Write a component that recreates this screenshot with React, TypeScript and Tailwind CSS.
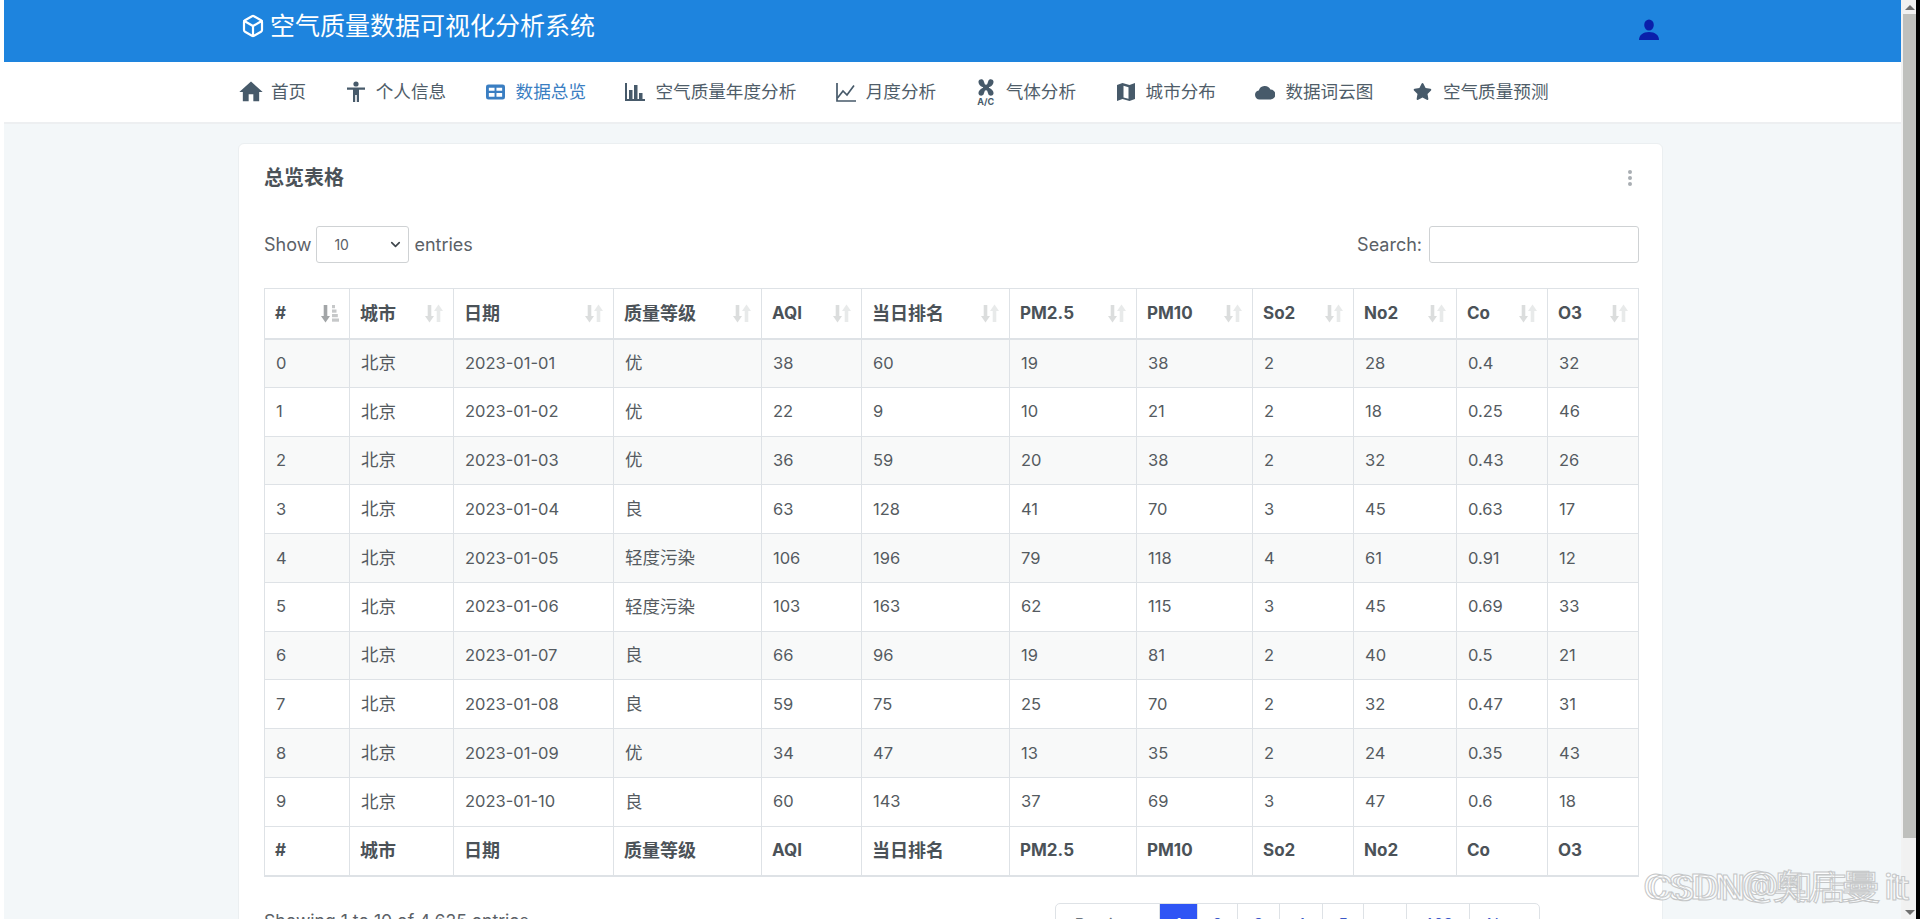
import React from "react";
import { FaStar } from "react-icons/fa";
import { MdHome } from "react-icons/md";
import { Box, ChevronDown } from "lucide-react";

const cols = [
  { n: "#", w: 85 },
  { n: "城市", w: 104 },
  { n: "日期", w: 160 },
  { n: "质量等级", w: 148 },
  { n: "AQI", w: 100 },
  { n: "当日排名", w: 148 },
  { n: "PM2.5", w: 127 },
  { n: "PM10", w: 116 },
  { n: "So2", w: 101 },
  { n: "No2", w: 103 },
  { n: "Co", w: 91 },
  { n: "O3", w: 91 },
];

const rows: (string | number)[][] = [
  [0, "北京", "2023-01-01", "优", 38, 60, 19, 38, 2, 28, 0.4, 32],
  [1, "北京", "2023-01-02", "优", 22, 9, 10, 21, 2, 18, 0.25, 46],
  [2, "北京", "2023-01-03", "优", 36, 59, 20, 38, 2, 32, 0.43, 26],
  [3, "北京", "2023-01-04", "良", 63, 128, 41, 70, 3, 45, 0.63, 17],
  [4, "北京", "2023-01-05", "轻度污染", 106, 196, 79, 118, 4, 61, 0.91, 12],
  [5, "北京", "2023-01-06", "轻度污染", 103, 163, 62, 115, 3, 45, 0.69, 33],
  [6, "北京", "2023-01-07", "良", 66, 96, 19, 81, 2, 40, 0.5, 21],
  [7, "北京", "2023-01-08", "良", 59, 75, 25, 70, 2, 32, 0.47, 31],
  [8, "北京", "2023-01-09", "优", 34, 47, 13, 35, 2, 24, 0.35, 43],
  [9, "北京", "2023-01-10", "良", 60, 143, 37, 69, 3, 47, 0.6, 18],
];

const pages = [
  { t: "Previous", w: 104, c: "text-[#6c757d]" },
  { t: "1", w: 38, c: "bg-[#2f55f5] text-white" },
  { t: "2", w: 40, c: "text-[#3a57c8]" },
  { t: "3", w: 42, c: "text-[#3a57c8]" },
  { t: "4", w: 43, c: "text-[#3a57c8]" },
  { t: "5", w: 41, c: "text-[#3a57c8]" },
  { t: "…", w: 43, c: "text-[#6c757d]" },
  { t: "463", w: 63, c: "text-[#3a57c8]" },
  { t: "Next", w: 69, c: "text-[#3a57c8]" },
];

const cjk = (v: string | number) => typeof v === "string" && /[\u4e00-\u9fff]/.test(v);

function SortIcon({ active }: { active?: boolean }) {
  if (active) {
    return (
      <svg width="18" height="19" viewBox="0 0 18 19" className="shrink-0">
        <path d="M4.500 1v12" stroke="#a2a5a7" strokeWidth="3.600" />
        <path d="M0 12h9l-4.500 6.500z" fill="#a2a5a7" />
        <rect x="11" y="1" width="3" height="3.200" fill="#c6c8c9" />
        <rect x="11" y="5.500" width="4.500" height="3.200" fill="#c6c8c9" />
        <rect x="11" y="10" width="5.800" height="3.200" fill="#c6c8c9" />
        <rect x="11" y="14.500" width="7" height="3.200" fill="#c6c8c9" />
      </svg>
    );
  }
  return (
    <svg width="18" height="19" viewBox="0 0 18 19" className="shrink-0">
      <path d="M4.500 1v12" stroke="#dbdddd" strokeWidth="3.600" />
      <path d="M0 12h9l-4.500 6.500z" fill="#dbdddd" />
      <path d="M13.500 18V6" stroke="#e8eaea" strokeWidth="3.600" />
      <path d="M9 7h9L13.500 .5z" fill="#e8eaea" />
    </svg>
  );
}

function PersonIcon() {
  return (
    <svg width="20" height="22" viewBox="0 0 20 22" fill="#475a6a">
      <circle cx="10" cy="3" r="2.600" />
      <path d="M1 6.500h18v2.200h-6V21h-2.200v-7H9.200v7H7V8.700H1z" />
    </svg>
  );
}

function GridIcon() {
  return (
    <svg width="19" height="16" viewBox="0 0 20 16" fill="#3a7ec2">
      <path d="M2.500 0h15A2.500 2.500 0 0 1 20 2.500v11a2.500 2.500 0 0 1-2.500 2.500h-15A2.500 2.500 0 0 1 0 13.500v-11A2.500 2.500 0 0 1 2.500 0zM3 3.500v3.300h6V3.500zm8 0v3.300h6V3.500zM3 9v4h6V9zm8 0v4h6V9z" fillRule="evenodd" />
    </svg>
  );
}

function BarsIcon() {
  return (
    <svg width="20" height="20" viewBox="0 0 20 20" fill="#475a6a">
      <rect x="0" y="1" width="2" height="18" />
      <rect x="0" y="17" width="20" height="2" />
      <rect x="4" y="8" width="3.500" height="9" />
      <rect x="9" y="3" width="3.500" height="14" />
      <rect x="14" y="11" width="3.500" height="6" />
    </svg>
  );
}

function LineIcon() {
  return (
    <svg width="20" height="20" viewBox="0 0 20 20" fill="none" stroke="#475a6a" strokeWidth="1.700">
      <path d="M1 1v18h19" />
      <path d="M1.500 16 7 9l4 4 7-9.500" />
    </svg>
  );
}

function FanIcon() {
  return (
    <span className="flex w-[20px] flex-col items-center">
      <svg width="18" height="17" viewBox="0 0 18 17" fill="#475a6a">
        <path d="M9 8.500 6.500 1.500C5.500-.2 2-.2 1.500 2.500c-.3 2 1.500 4.500 4 5.500zM9 8.500l2.500-7c1-1.700 4.500-1.700 5 1 .3 2-1.500 4.500-4 5.500zM9 8.500l-2.500 7c-1 1.700-4.500 1.700-5-1-.3-2 1.500-4.500 4-5.500zM9 8.500l2.500 7c1 1.700 4.500 1.700 5-1 .3-2-1.500-4.500-4-5.500z" />
        <circle cx="9" cy="8.500" r="3" />
      </svg>
      <span className="mt-[1px] text-[9px] leading-[9px] font-bold text-[#475a6a]">A/C</span>
    </span>
  );
}

function MapIcon() {
  return (
    <svg width="18" height="20" viewBox="0 0 18 20" fill="#475a6a">
      <path d="M0 3 5.500 1 12.500 3 18 1v16l-5.500 2-7-2L0 19zM6.500 3.800v11.600l5 1.400V5.200z" fillRule="evenodd" />
    </svg>
  );
}

function CloudIcon() {
  return (
    <svg width="24" height="18" viewBox="0 0 24 18" fill="#475a6a">
      <path d="M5.500 18A5.500 5.500 0 0 1 4.500 7.100 7.500 7.500 0 0 1 18.500 6 6 6 0 0 1 18.500 18z" />
    </svg>
  );
}

function UserIcon() {
  return (
    <svg width="22" height="22" viewBox="0 0 22 22" fill="#0a1faa">
      <ellipse cx="11" cy="6" rx="4.800" ry="5.500" />
      <path d="M1 21c0-5 4-8 10-8s10 3 10 8z" />
    </svg>
  );
}

const nav = [
  { t: "首页", i: <MdHome size={28} color="#475a6a" className="shrink-0" /> },
  { t: "个人信息", i: <PersonIcon /> },
  { t: "数据总览", i: <GridIcon />, active: true },
  { t: "空气质量年度分析", i: <BarsIcon /> },
  { t: "月度分析", i: <LineIcon /> },
  { t: "气体分析", i: <FanIcon /> },
  { t: "城市分布", i: <MapIcon /> },
  { t: "数据词云图", i: <CloudIcon /> },
  { t: "空气质量预测", i: <FaStar size={19} color="#475a6a" /> },
];

export default function App() {
  return (
    <div className="relative flex h-[919px] w-[1920px] overflow-hidden bg-white [font-family:Inter,'Noto_Sans_CJK_SC',sans-serif] text-[#555b61]">
      <div className="w-[4px] shrink-0 bg-white" />
      <main className="flex h-full w-[1897px] shrink-0 flex-col bg-[#f3f7f9]">
        <header className="h-[62px] shrink-0 bg-[#1e84de]">
          <div className="ml-[237px] flex h-full w-[1425px] items-start justify-between">
            <div className="flex items-center gap-[5px] pt-[7px] text-[25px] leading-[38px] text-white">
              <Box size={24} strokeWidth={2.200} />
              <span>空气质量数据可视化分析系统</span>
            </div>
            <div className="mr-[6px] mt-[19px]">
              <UserIcon />
            </div>
          </div>
        </header>
        <nav className="h-[62px] shrink-0 border-b-2 border-[#edeff1] bg-white">
          <div className="ml-[237px] flex h-full items-center gap-[39.5px]">
            {nav.map((n) => (
              <div key={n.t} className={`flex items-center gap-[10px] text-[17.6px] ${n.active ? "text-[#3a7ec2]" : "text-[#4f5d69]"}`}>
                <span className="flex w-[20px] items-center justify-center">{n.i}</span>
                <span>{n.t}</span>
              </div>
            ))}
          </div>
        </nav>
        <section className="ml-[234px] mt-[19px] w-[1425px] rounded-t-[6px] border border-[#ebeff1] bg-white px-[25px]">
          <div className="flex h-[70px] items-center justify-between pb-[2px]">
            <h2 className="text-[20px] font-bold text-[#4b5258]">总览表格</h2>
            <div className="mr-[5px] flex flex-col gap-[2px]">
              <span className="h-[4px] w-[4px] rounded-full bg-[#a9aeb3]" />
              <span className="h-[4px] w-[4px] rounded-full bg-[#a9aeb3]" />
              <span className="h-[4px] w-[4px] rounded-full bg-[#a9aeb3]" />
            </div>
          </div>
          <div className="mt-[12px] flex h-[37px] w-[1375px] items-center justify-between text-[18px] text-[#5b6167]">
            <div className="flex items-center gap-[5px]">
              <span>Show</span>
              <div className="flex h-[37px] w-[93px] items-center justify-between rounded-[3px] border border-[#cfd2d4] pl-[17px] pr-[5px] text-[14px]">
                <span>10</span>
                <ChevronDown size={15} strokeWidth={2.600} color="#3f464c" />
              </div>
              <span>entries</span>
            </div>
            <div className="flex items-center gap-[7px]">
              <span>Search:</span>
              <div className="h-[37px] w-[210px] rounded-[3px] border border-[#cfd2d4] bg-white" />
            </div>
          </div>
          <table className="mt-[25px] w-[1375px] table-fixed border-collapse">
            <colgroup>
              {cols.map((c) => (
                <col key={c.n} style={{ width: c.w }} />
              ))}
            </colgroup>
            <thead>
              <tr className="h-[50px]">
                {cols.map((c, i) => (
                  <th key={c.n} className={`border border-b-2 border-[#dee2e6] px-[10px] text-left font-bold text-[#4b5258] ${cjk(c.n) ? "text-[18px]" : "text-[17px]"}`}>
                    <div className="flex items-center justify-between">
                      <span>{c.n}</span>
                      <SortIcon active={i === 0} />
                    </div>
                  </th>
                ))}
              </tr>
            </thead>
            <tbody>
              {rows.map((r, ri) => (
                <tr key={ri} className={`h-[48.75px] ${ri % 2 === 0 ? "bg-[#f8f9f9]" : "bg-white"}`}>
                  {r.map((v, ci) => (
                    <td key={ci} className={`border border-[#dee2e6] px-[11px] ${cjk(v) ? "text-[17.5px]" : "text-[16.5px]"}`}>
                      {v}
                    </td>
                  ))}
                </tr>
              ))}
            </tbody>
            <tfoot>
              <tr className="h-[50px]">
                {cols.map((c) => (
                  <th key={c.n} className={`border border-b-2 border-[#dee2e6] px-[10px] text-left font-bold text-[#4b5258] ${cjk(c.n) ? "text-[18px]" : "text-[17px]"}`}>
                    {c.n}
                  </th>
                ))}
              </tr>
            </tfoot>
          </table>
          <div className="mt-[26px] flex w-[1375px] items-start justify-between text-[17.6px] text-[#5b6167]">
            <span className="mt-[5px] leading-[26px]">Showing 1 to 10 of 4,625 entries</span>
            <div className="mr-[99px] flex rounded-[5px] border border-[#dee2e6]">
              {pages.map((p) => (
                <span key={p.t} className={`flex h-[40px] items-center justify-center border-r border-[#dee2e6] text-[16px] last:border-r-0 ${p.c}`} style={{ width: p.w }}>
                  {p.t}
                </span>
              ))}
            </div>
          </div>
        </section>
      </main>
      <div className="h-full w-[2px] shrink-0 bg-[#f2f2f2]" />
      <aside className="flex h-full w-[13px] shrink-0 flex-col items-center bg-[#f1f1f1]">
        <div className="flex h-[14px] items-center justify-center">
          <span className="h-0 w-0 border-x-[5px] border-b-[5px] border-x-transparent border-b-[#6f6f6f]" />
        </div>
        <div className="h-[824px] w-full bg-[#bfc0bd]" />
        <div className="flex-1" />
        <div className="flex h-[14px] items-center justify-center">
          <span className="h-0 w-0 border-x-[5px] border-t-[5px] border-x-transparent border-t-[#6f6f6f]" />
        </div>
      </aside>
      <div className="h-full w-[4px] shrink-0 bg-black" />
      <div className="pointer-events-none absolute left-[1643px] top-[866px] w-[273px] overflow-hidden whitespace-nowrap text-[34px] leading-[42px] text-white/80 [-webkit-text-stroke:1px_#c4c6c7]">
        CSDN@奥月曼 it
      </div>
      <div className="pointer-events-none absolute left-[1649px] top-[867px] w-[267px] overflow-hidden whitespace-nowrap text-[34px] leading-[42px] text-white/40 [-webkit-text-stroke:1px_#c4c6c7]">
        CSDN@知店曼 it
      </div>
    </div>
  );
}
